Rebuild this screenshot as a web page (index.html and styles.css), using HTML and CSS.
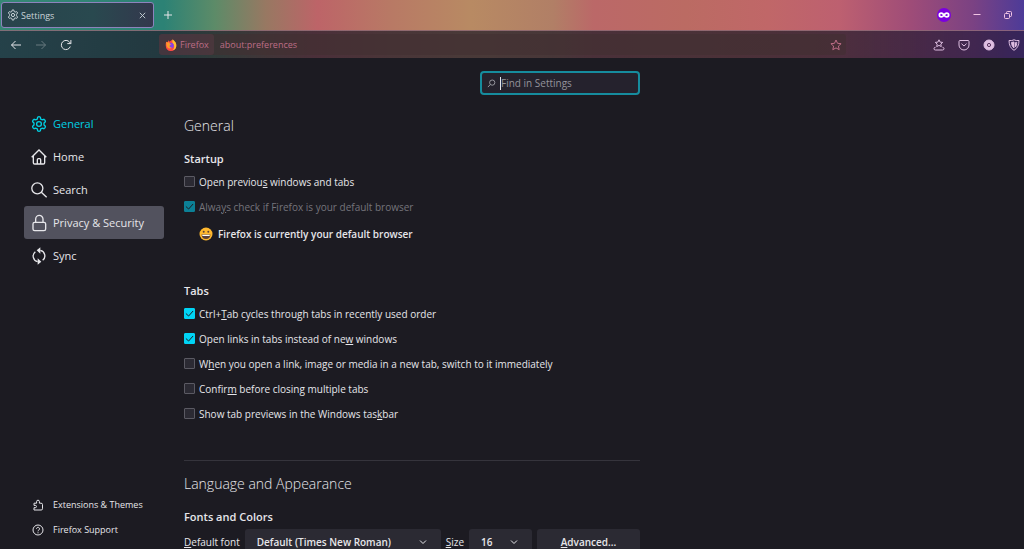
FILE: index.html
```html
<!DOCTYPE html>
<html lang="en">
<head>
  <meta charset="UTF-8">
  <meta name="viewport" content="width=device-width, initial-scale=1.0">
  <title>Settings</title>
  <link rel="stylesheet" href="styles.css">
</head>
<body>
  <!-- Browser chrome -->
  <header class="browser">
    <div class="tab-strip">
      <div class="tab">
        <svg class="tab-icon" viewBox="0 0 24 24"><path d="M9.700 5L10.500 2Q12 1 13.500 2l.8 3 2 1.200 3-.9q1.800.8 1.700 2.700L18.900 10.700v2.600L21 16q0 1.900-1.700 2.700l-3-.9-2 1.200-.8 3q-1.500 1-3 0l-.8-3-2-1.200-3 .9Q3 17.900 3 16l2.100-2.700v-2.600L3 8q0-1.900 1.700-2.700l3 .9z"/><circle cx="12" cy="12" r="3.200"/></svg>
        <span class="tab-title">Settings</span>
        <button class="close-tab" aria-label="Close tab"><svg viewBox="0 0 10 10"><path d="M2 2l6 6M8 2l-6 6"/></svg></button>
      </div>
      <button class="new-tab" aria-label="New tab"><svg viewBox="0 0 10 10"><path d="M5 1v8M1 5h8"/></svg></button>
      <div class="window-buttons">
        <svg class="private-badge" viewBox="0 0 16 16"><circle cx="8" cy="8" r="8"/><path d="M8 8C6.800 6.300 6 5.800 4.900 5.800a2.200 2.200 0 0 0 0 4.400C6 10.200 6.800 9.700 8 8s2-2.200 3.100-2.200a2.200 2.200 0 0 1 0 4.400C10 10.200 9.200 9.700 8 8z"/></svg>
        <button aria-label="Minimize"><svg viewBox="0 0 10 10"><path d="M1.500 4.500h7"/></svg></button>
        <button aria-label="Restore"><svg viewBox="0 0 10 10"><rect x="1.500" y="3.500" width="5" height="5" rx="1"/><path d="M3.500 3.500v-1q0-1 1-1h3q1 0 1 1v3q0 1-1 1h-1"/></svg></button>
      </div>
    </div>
    <div class="toolbar">
      <div class="nav-buttons">
        <button aria-label="Back"><svg viewBox="0 0 12 12"><path d="M11 6H1.500M5.500 2l-4 4 4 4"/></svg></button>
        <button aria-label="Forward" disabled><svg viewBox="0 0 12 12"><path d="M1 6h9.500M6.500 2l4 4-4 4"/></svg></button>
        <button aria-label="Reload"><svg viewBox="0 0 12 12"><path d="M10.300 7.500A4.600 4.600 0 1 1 9.600 3.200L10.800 4.500M10.900 1v3.600H7.300"/></svg></button>
      </div>
      <div class="url-bar">
        <span class="identity">
          <svg class="firefox-logo" viewBox="0 0 16 16">
            <path fill="#ff4a45" d="M1.600 3.500l1.500 1L5 1.500l1 2.300 4-3 .8 2.400L13.500 4c1.500 2 1.800 3.500 1.500 5.500A7 7 0 0 1 1 8.800C.8 7 1 5 1.600 3.500z"/>
            <path fill="#ffc02e" d="M10 .8c2 1 5.500 4 5 8.700a6.500 6.500 0 0 1-5 5.500c3-3 3-6 1-8.500-1-1.200-1.600-3.500-1-5.700z"/>
            <circle cx="8" cy="8.700" r="3.700" fill="#8743e8"/>
            <path fill="#ff9a28" d="M1.600 3.500l1.500 1c2-.5 3 .3 3.400 1.700l2 .7-2 1.300c-1 1.500.4 3.300 2.600 2.700C7 14 2.800 12.500 2 9z"/>
          </svg>
          Firefox
        </span>
        <input class="url" type="text" value="about:preferences" aria-label="Address">
        <button class="bookmark" aria-label="Bookmark this page"><svg viewBox="0 0 12 12"><path d="M6 1l1.500 3.300 3.600.4-2.700 2.400.8 3.600L6 8.900l-3.200 1.800.8-3.600L.9 4.700l3.600-.4z"/></svg></button>
      </div>
      <div class="extensions">
        <button aria-label="Bookmarks"><svg viewBox="0 0 12 12"><path d="M6 .8l1.100 2.300 2.600.3-1.900 1.700.5 2.500L6 6.400 3.700 7.600l.5-2.500-1.900-1.700 2.600-.3zM2.500 8.300Q1 8.300 1 9.700T2.500 11h7Q11 11 11 9.700T9.500 8.300"/></svg></button>
        <button aria-label="Pocket"><svg viewBox="0 0 12 12"><path d="M2 1.500h8q1 0 1 1V6a5 5 0 0 1-10 0V2.500q0-1 1-1zM3.500 4.700L6 7l2.500-2.300"/></svg></button>
        <button aria-label="Privacy extension"><svg viewBox="0 0 12 12"><circle class="filled" cx="6" cy="6" r="5"/><circle class="ring" cx="6" cy="6" r="1.600"/></svg></button>
        <button aria-label="Shield extension"><svg viewBox="0 0 12 12"><path d="M1 1.500Q4 2 6 .8 8 2 11 1.500 11 8.500 6 11.300 1 8.500 1 1.500z"/><path class="filled" d="M3.500 3.500L6 3v6Q3.500 7 3.500 3.500z"/><path d="M7.500 3.500h1.300q0 3-1.300 4.500z"/></svg></button>
      </div>
    </div>
  </header>

  <div class="page">
    <!-- Categories -->
    <aside class="sidebar">
      <nav class="categories">
        <a class="category active" href="#general">
          <svg viewBox="0 0 24 24"><path d="M9.500 4.500L10 1.800Q12 .2 14 1.800l.5 2.700 2.300 1.300 2.700-.9q2.300 1 2.100 3.500L19.500 10.600v2.800l2.100 2.200q.2 2.500-2.100 3.500l-2.700-.9-2.300 1.300-.5 2.700q-2 1.600-4 0l-.5-2.700-2.300-1.300-2.700.9q-2.300-1-2.100-3.500l2.100-2.200v-2.800L2.400 8.400q-.2-2.500 2.100-3.500l2.700.9z"/><circle cx="12" cy="12" r="3.600"/></svg>
          General
        </a>
        <a class="category" href="#home">
          <svg viewBox="0 0 24 24"><path d="M1 12.500L12 1.500l11 11M3.500 10.500V20.500q0 2 2 2h13q2 0 2-2v-10M9.500 22.500v-6.500q0-1.500 1.500-1.500h2q1.500 0 1.500 1.500v6.500"/></svg>
          Home
        </a>
        <a class="category" href="#search">
          <svg viewBox="0 0 24 24"><circle cx="9.500" cy="9.500" r="8.300"/><path d="M15.500 15.500l8 7.500"/></svg>
          Search
        </a>
        <a class="category hovered" href="#privacy">
          <svg viewBox="0 0 24 24"><rect x="3" y="11" width="19" height="12.500" rx="2.500"/><path d="M7 11V6a5.500 5.500 0 0 1 11 0V11"/></svg>
          Privacy &amp; Security
        </a>
        <a class="category" href="#sync">
          <svg viewBox="0 0 24 24"><path d="M10 20.500A8.500 8.500 0 0 1 6.500 5.500M14 3.500a8.500 8.500 0 0 1 3.500 15"/><path class="solid" d="M14-1v9.500L8.500 3.500zM10 25v-9.500l5.500 5z"/></svg>
          Sync
        </a>
      </nav>
      <nav class="help-links">
        <a href="#extensions">
          <svg viewBox="0 0 12 12"><path d="M2 4.200h2.600V2.600a1.400 1.400 0 0 1 2.800 0v1.600H9q1.500 0 1.500 1.300v4.200q0 1.300-1.300 1.300H2V8.700h1.300a1.100 1.100 0 0 0 0-2.300H2z"/></svg>
          Extensions &amp; Themes
        </a>
        <a href="#support">
          <svg viewBox="0 0 12 12"><circle cx="6" cy="6" r="5"/><path d="M4.500 4.800a1.500 1.500 0 1 1 2.400 1.200Q6 6.500 6 7.300M6 8.300v1"/></svg>
          Firefox Support
        </a>
      </nav>
    </aside>

    <!-- Preferences -->
    <main class="content">
      <div class="search-row">
        <label class="search-box">
          <svg viewBox="0 0 10 10"><circle cx="5.800" cy="4" r="2.900"/><path d="M3.700 6.100L1 9"/></svg>
          <span class="caret"></span>
          <input type="search" placeholder="Find in Settings" aria-label="Find in Settings">
        </label>
      </div>

      <h1 id="general">General</h1>

      <section class="startup">
        <h2>Startup</h2>
        <label class="check"><input type="checkbox"><span>Open previou<u>s</u> windows and tabs</span></label>
        <label class="check"><input type="checkbox" checked disabled><span>Alwa<u>y</u>s check if Firefox is your default browser</span></label>
        <p class="default-status">
          <svg viewBox="0 0 14 14"><circle cx="7" cy="7" r="6.500" fill="#ffb82e"/><path d="M2.500 7.500h9Q11 12 7 12T2.500 7.500z" fill="#5b4038"/><path d="M3.300 7.800h7.400v1.200H3.300z" fill="#fff"/><circle cx="4.700" cy="4.700" r="1" fill="#5b4038"/><circle cx="9.300" cy="4.700" r="1" fill="#5b4038"/></svg>
          Firefox is currently your default browser
        </p>
      </section>

      <section class="tabs">
        <h2>Tabs</h2>
        <label class="check"><input type="checkbox" checked><span>Ctrl+<u>T</u>ab cycles through tabs in recently used order</span></label>
        <label class="check"><input type="checkbox" checked><span>Open links in tabs instead of ne<u>w</u> windows</span></label>
        <label class="check"><input type="checkbox"><span>W<u>h</u>en you open a link, image or media in a new tab, switch to it immediately</span></label>
        <label class="check"><input type="checkbox"><span>Confir<u>m</u> before closing multiple tabs</span></label>
        <label class="check"><input type="checkbox"><span>Show tab previews in the Windows tas<u>k</u>bar</span></label>
      </section>

      <section class="appearance">
        <h1>Language and Appearance</h1>
        <h2>Fonts and Colors</h2>
        <div class="font-row">
          <label for="default-font"><u>D</u>efault font</label>
          <select id="default-font" class="font-select"><option>Default (Times New Roman)</option></select>
          <label for="font-size"><u>S</u>ize</label>
          <select id="font-size" class="size-select"><option>16</option></select>
          <button class="advanced"><span><u>A</u>dvanced...</span></button>
        </div>
      </section>
    </main>
  </div>
</body>
</html>
```
FILE: styles.css
```css
* {
  box-sizing: border-box;
}

body {
  margin: 0;
  height: 100vh;
  display: flex;
  flex-direction: column;
  overflow: hidden;
  background: #1c1b22;
  color: #e6e6ea;
  font-family: "Open Sans", "Noto Sans", sans-serif;
  font-size: 10px;
}

button,
input,
select {
  font: inherit;
  color: inherit;
}

button {
  padding: 0;
  border: none;
  background: none;
}

svg {
  display: block;
  flex: none;
  fill: none;
  stroke: currentColor;
  overflow: visible;
}

/* Browser chrome */
.browser {
  flex: none;
  background: linear-gradient(to right, #368875 0%, #2c8275 16%, #5d8b68 21%, #987862 26%, #bd6468 31%, #b87965 38%, #b88a63 46%, #b17f66 54%, #bb6868 58%, #bb6b63 67%, #c06768 75%, #bd6070 82%, #9e4c78 89%, #7b4283 95%, #4d3b98 100%);
}

.tab-strip {
  display: flex;
  align-items: center;
  height: 30px;
  padding: 2px 0 2px 1px;
}

.tab {
  display: flex;
  align-items: center;
  gap: 2px;
  width: 153px;
  height: 26px;
  padding: 0 6px 0 5px;
  border: 1px solid #8d83bd;
  border-radius: 3px;
  background: linear-gradient(to right, #28434c, #29494f 60%, #33384d);
  color: #c9d3d8;
  font-size: 9px;
}

.tab-icon {
  width: 12px;
  height: 12px;
  stroke-width: 2;
}

.tab-title {
  flex: 1;
}

.close-tab svg {
  width: 9px;
  height: 9px;
}

.new-tab svg {
  width: 10px;
  height: 10px;
  margin-left: 9px;
}

.window-buttons {
  display: flex;
  align-items: center;
  gap: 21px;
  margin-left: auto;
  padding-right: 11px;
  color: #f2c4e4;
}

.window-buttons button svg {
  width: 10px;
  height: 10px;
}

.private-badge {
  width: 14px;
  height: 14px;
  stroke: none;
}

.private-badge circle {
  fill: #7b00df;
}

.private-badge path {
  stroke: #fff;
  stroke-width: 2;
}

.toolbar {
  display: flex;
  align-items: center;
  height: 28px;
  padding: 0 4px 0 10px;
  border-top: 1px solid rgba(190, 140, 150, .6);
  background: linear-gradient(to right, rgba(30, 38, 56, .72), rgba(31, 27, 39, .72) 20%, rgba(31, 27, 39, .72) 80%, rgba(44, 27, 64, .7));
}

.toolbar svg {
  width: 12px;
  height: 12px;
}

.nav-buttons {
  display: flex;
  gap: 13px;
  width: 149px;
}

.nav-buttons button:disabled {
  opacity: .35;
}

.url-bar {
  display: flex;
  flex: 1;
  align-items: center;
  height: 21px;
  margin-right: 87px;
  padding-right: 4px;
  border-radius: 3px;
  background: rgba(66, 48, 50, .55);
  color: #bd6d86;
}

.identity {
  display: flex;
  align-items: center;
  gap: 3px;
  height: 21px;
  padding: 0 5px 0 6px;
  border-radius: 3px;
  background: rgba(130, 70, 90, .22);
  font-size: 9px;
}

.firefox-logo {
  stroke: none;
}

.url {
  flex: 1;
  min-width: 0;
  padding: 0 6px;
  border: none;
  outline: none;
  background: none;
  font-size: 9px;
}

.extensions {
  display: flex;
  gap: 13px;
  color: #dfbfe2;
}

.extensions .filled {
  fill: currentColor;
}

.extensions .ring {
  stroke: #56325c;
}

/* Settings page */
.page {
  flex: 1;
  display: flex;
  min-height: 0;
}

.sidebar {
  display: flex;
  flex-direction: column;
  justify-content: space-between;
  flex: none;
  width: 184px;
  padding: 49px 20px 7px 24px;
}

.sidebar a {
  display: flex;
  align-items: center;
  color: inherit;
  text-decoration: none;
}

.category {
  height: 33px;
  gap: 6px;
  padding-left: 7px;
  border-radius: 3px;
  font-size: 11px;
}

.category svg {
  width: 16px;
  height: 16px;
  stroke-width: 2;
}

.category .solid {
  fill: currentColor;
  stroke: none;
}

.category.active {
  color: #00cfe2;
}

.category.hovered {
  background: #52525e;
}

.help-links a {
  height: 25px;
  gap: 9px;
  padding-left: 8px;
  font-size: 9px;
}

.help-links svg {
  width: 12px;
  height: 12px;
}

.content {
  flex: 1;
  max-width: 456px;
}

.search-row {
  display: flex;
  justify-content: flex-end;
  padding: 13px 0 20px;
}

.search-box {
  display: flex;
  align-items: center;
  width: 160px;
  height: 24px;
  padding: 0 5px;
  border: 2px solid #168c9e;
  border-radius: 4px;
  background: #25222d;
  color: #a0a0a8;
}

.search-box svg {
  width: 9px;
  height: 9px;
}

.caret {
  width: 1px;
  height: 13px;
  margin-left: 4px;
  background: #e6e6ea;
}

.search-box input {
  flex: 1;
  min-width: 0;
  padding: 0;
  border: none;
  outline: none;
  background: none;
}

.search-box input::placeholder {
  color: #94939b;
}

h1 {
  margin: 0;
  font-size: 14px;
  font-weight: 300;
  line-height: 22px;
}

h2 {
  margin: 0;
  font-size: 11px;
  font-weight: 600;
  line-height: 20px;
}

.startup {
  margin-top: 12px;
}

.check {
  display: flex;
  align-items: center;
  gap: 4px;
  height: 25px;
}

.check input {
  appearance: none;
  width: 11px;
  height: 11px;
  margin: 0;
  border: 1px solid #5b5a63;
  border-radius: 1px;
  background: #2b2a33;
}

.check input:checked {
  border-color: #00d4f5;
  background: #00d4f5 url("data:image/svg+xml,%3Csvg xmlns='http://www.w3.org/2000/svg' viewBox='0 0 10 10'%3E%3Cpath d='M1 5L4 7.800 9 2.200' fill='none' stroke='%231c1b22' stroke-width='1.100'/%3E%3C/svg%3E") center / 9px no-repeat;
}

.check:has(input:disabled) {
  color: #75747b;
}

.check input:disabled {
  opacity: .55;
}

u {
  text-underline-offset: 1px;
}

.default-status {
  display: flex;
  align-items: center;
  gap: 5px;
  height: 20px;
  margin: 5px 0 0 15px;
  font-weight: 600;
}

.default-status svg {
  width: 14px;
  height: 14px;
  stroke: none;
}

.tabs {
  margin-top: 37px;
}

.appearance {
  margin-top: 34px;
  padding-top: 12px;
  border-top: 1px solid #35343c;
}

.appearance h2 {
  margin-top: 12px;
}

.font-row {
  display: flex;
  align-items: center;
  gap: 5px;
  margin-top: 2px;
}

.font-row select,
.advanced {
  height: 26px;
  border: none;
  border-radius: 3px;
  background-color: #2b2a33;
  font-weight: 600;
}

.font-row select {
  appearance: none;
  padding: 0 12px;
  background-image: url("data:image/svg+xml,%3Csvg xmlns='http://www.w3.org/2000/svg' viewBox='0 0 8 8'%3E%3Cpath d='M1 2.500L4 5.500 7 2.500' fill='none' stroke='%23e6e6ea'/%3E%3C/svg%3E");
  background-position: right 14px center;
  background-size: 8px;
  background-repeat: no-repeat;
}

.font-select {
  flex: 1;
  min-width: 0;
}

.size-select {
  width: 63px;
}

.advanced {
  width: 103px;
}
```
